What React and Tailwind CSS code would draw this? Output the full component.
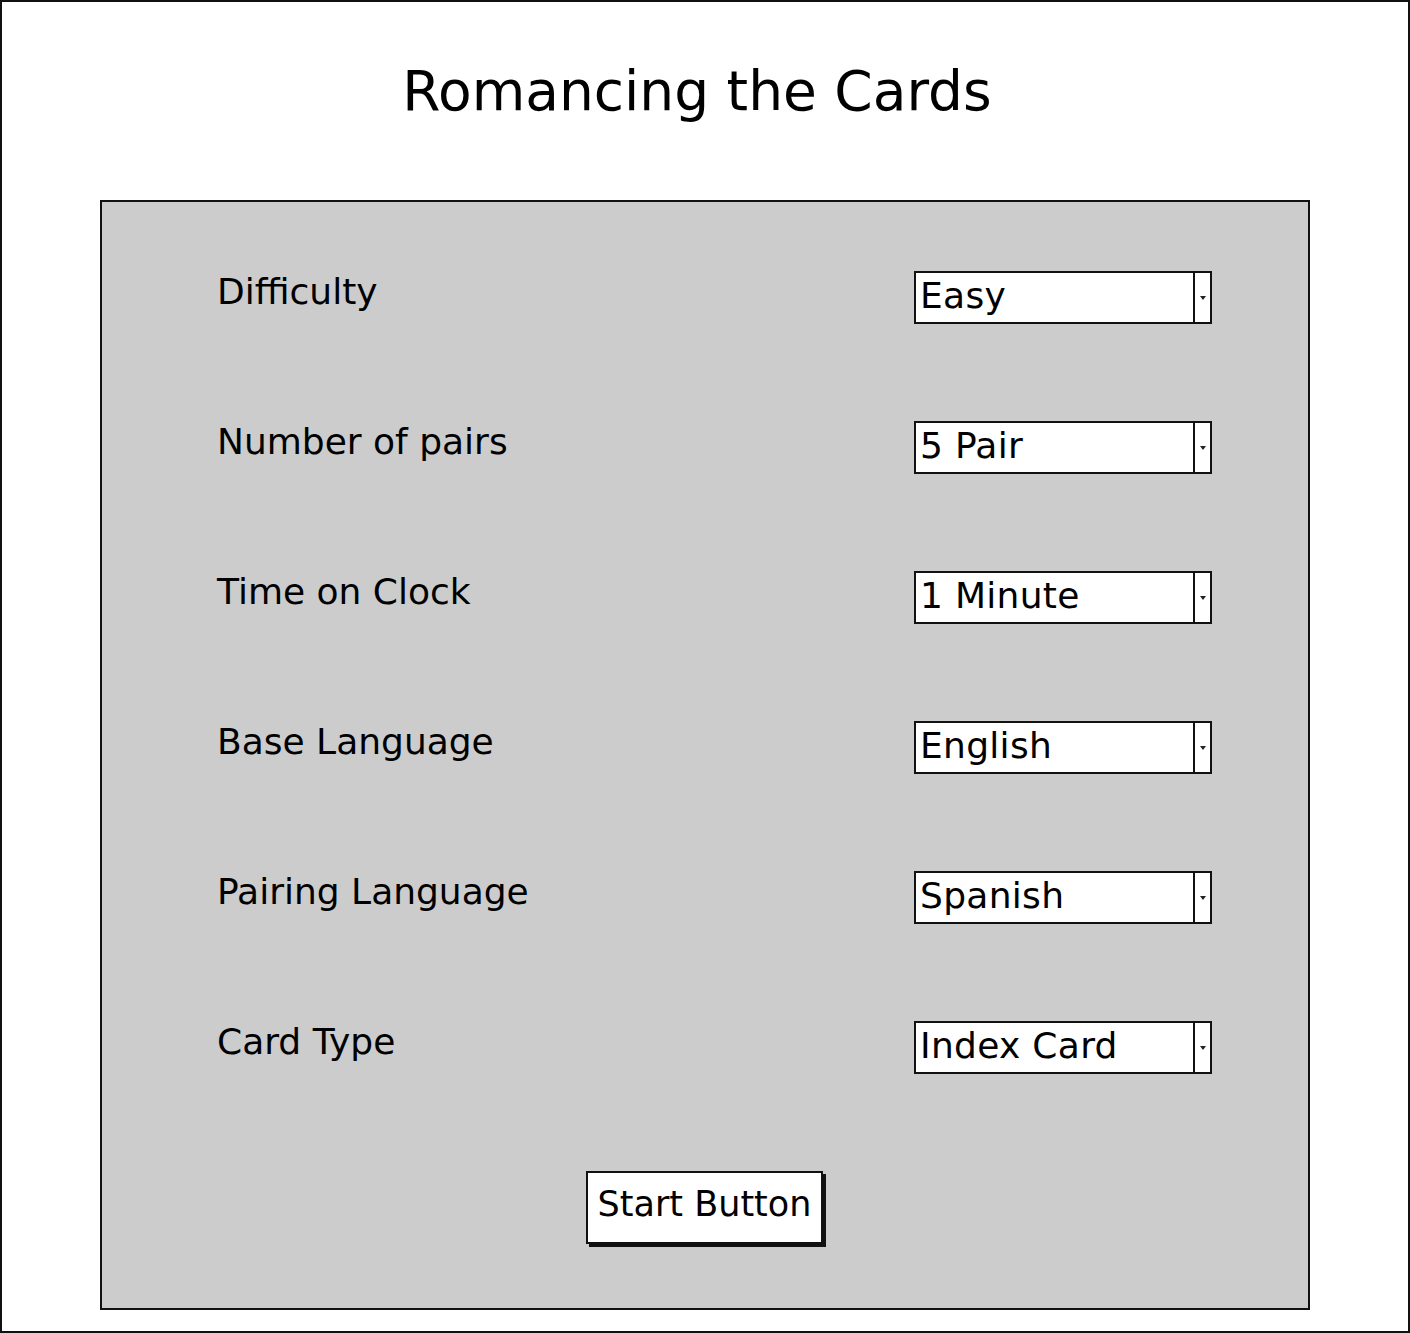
import React from "react";

const rows = [
  ["Difficulty", "Easy"],
  ["Number of pairs", "5 Pair"],
  ["Time on Clock", "1 Minute"],
  ["Base Language", "English"],
  ["Pairing Language", "Spanish"],
  ["Card Type", "Index Card"],
];

function Select({ value }) {
  return (
    <div className="flex h-[53px] w-[298px] border-2 border-[#111] bg-white">
      <div className="flex flex-1 items-center pb-[4px] pl-[4px] text-[36px] leading-none tracking-[0.3px] text-black">{value}</div>
      <div className="flex w-[17px] items-center justify-center border-l-2 border-[#111]">
        <svg width="6" height="4" viewBox="0 0 6 4"><path d="M0 0h6L3 4z" fill="#222" /></svg>
      </div>
    </div>
  );
}

export default function App() {
  return (
    <div
      className="flex h-[1333px] w-[1410px] flex-col items-center border-2 border-[#111] bg-white"
      style={{ fontFamily: "'DejaVu Sans', 'Noto Sans', sans-serif" }}
    >
      <div className="flex h-[198px] items-center pb-[20px] pr-[16px] text-[55px] text-black">Romancing the Cards</div>
      <div className="flex h-[1110px] w-[1210px] flex-col border-2 border-[#111] bg-[#cccccc] pl-[115px] pr-[96px] pt-[69px]">
        <div className="flex flex-col gap-[97px]">
          {rows.map(([label, value]) => (
            <div key={label} className="flex h-[53px] items-center justify-between">
              <div className="-mt-[12px] text-[36px] leading-none text-black">{label}</div>
              <Select value={value} />
            </div>
          ))}
        </div>
        <div className="mt-[97px] flex justify-center pr-[20px]">
          <div className="flex h-[73px] w-[237px] items-center justify-center border-2 border-[#111] bg-white pb-[6px] text-[35px] text-black shadow-[3px_3px_0_#111]">
            Start Button
          </div>
        </div>
      </div>
    </div>
  );
}
